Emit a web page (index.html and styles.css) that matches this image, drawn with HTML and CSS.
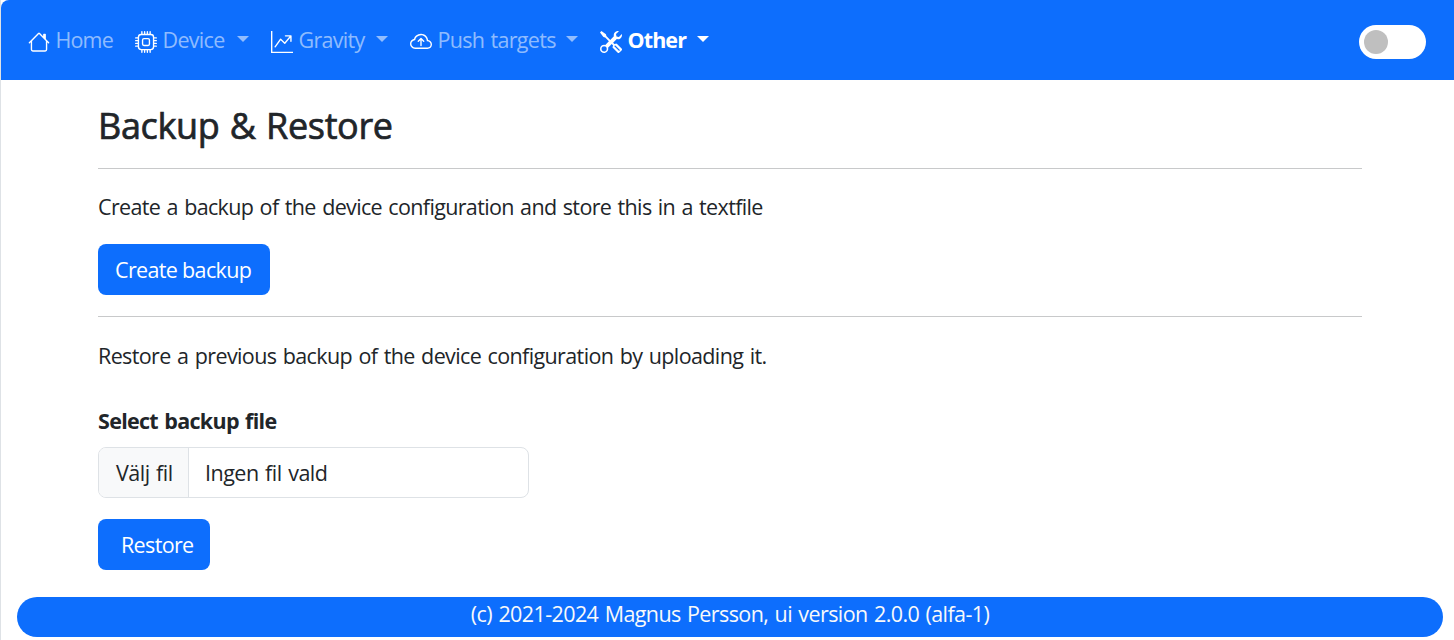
FILE: index.html
```html
<!DOCTYPE html>
<html lang="en">
<head>
<meta charset="utf-8">
<title>Backup &amp; Restore</title>
<link rel="stylesheet" href="styles.css">
</head>
<body>
<div class="app">
  <nav class="navbar">
    <a class="nav-item home"><svg class="icon" viewBox="0 0 16 16"><path d="M8.707 1.5a1 1 0 0 0-1.414 0L.646 8.146a.5.5 0 0 0 .708.708L2 8.207V13.5A1.5 1.5 0 0 0 3.5 15h9a1.5 1.5 0 0 0 1.5-1.5V8.207l.646.647a.5.5 0 0 0 .708-.708L13 5.793V2.5a.5.5 0 0 0-.5-.5h-1a.5.5 0 0 0-.5.5v1.293zM13 7.207V13.5a.5.5 0 0 1-.5.5h-9a.5.5 0 0 1-.5-.5V7.207l5-5z"/></svg><span class="nav-label">Home</span></a>
    <a class="nav-item device"><svg class="icon" viewBox="0 0 16 16"><path d="M5 0a.5.5 0 0 1 .5.5V2h1V.5a.5.5 0 0 1 1 0V2h1V.5a.5.5 0 0 1 1 0V2h1V.5a.5.5 0 0 1 1 0V2A2.5 2.5 0 0 1 14 4.5h1.5a.5.5 0 0 1 0 1H14v1h1.5a.5.5 0 0 1 0 1H14v1h1.5a.5.5 0 0 1 0 1H14v1h1.5a.5.5 0 0 1 0 1H14a2.5 2.5 0 0 1-2.5 2.5v1.5a.5.5 0 0 1-1 0V14h-1v1.5a.5.5 0 0 1-1 0V14h-1v1.5a.5.5 0 0 1-1 0V14h-1v1.5a.5.5 0 0 1-1 0V14A2.5 2.5 0 0 1 2 11.5H.5a.5.5 0 0 1 0-1H2v-1H.5a.5.5 0 0 1 0-1H2v-1H.5a.5.5 0 0 1 0-1H2v-1H.5a.5.5 0 0 1 0-1H2A2.5 2.5 0 0 1 4.5 2V.5A.5.5 0 0 1 5 0m-.5 3A1.5 1.5 0 0 0 3 4.5v7A1.5 1.5 0 0 0 4.5 13h7a1.5 1.5 0 0 0 1.5-1.5v-7A1.5 1.5 0 0 0 11.5 3zM5 6.5A1.5 1.5 0 0 1 6.5 5h3A1.5 1.5 0 0 1 11 6.5v3A1.5 1.5 0 0 1 9.5 11h-3A1.5 1.5 0 0 1 5 9.5zM6.5 6a.5.5 0 0 0-.5.5v3a.5.5 0 0 0 .5.5h3a.5.5 0 0 0 .5-.5v-3a.5.5 0 0 0-.5-.5z"/></svg><span class="nav-label">Device</span><span class="caret"></span></a>
    <a class="nav-item gravity"><svg class="icon" viewBox="0 0 16 16"><path fill-rule="evenodd" d="M0 0h1v15h15v1H0zm10 3.5a.5.5 0 0 1 .5-.5h4a.5.5 0 0 1 .5.5v4a.5.5 0 0 1-1 0V4.9l-3.613 4.417a.5.5 0 0 1-.74.037L7.06 6.767l-3.656 5.027a.5.5 0 0 1-.808-.588l4-5.5a.5.5 0 0 1 .758-.06l2.609 2.61L13.445 4H10.5a.5.5 0 0 1-.5-.5"/></svg><span class="nav-label">Gravity</span><span class="caret"></span></a>
    <a class="nav-item push"><svg class="icon" viewBox="0 0 16 16"><path fill-rule="evenodd" d="M7.646 5.146a.5.5 0 0 1 .708 0l2 2a.5.5 0 0 1-.708.708L8.5 6.707V10.5a.5.5 0 0 1-1 0V6.707L6.354 7.854a.5.5 0 1 1-.708-.708z"/><path d="M4.406 3.342A5.53 5.53 0 0 1 8 2c2.69 0 4.923 2 5.166 4.579C14.758 6.804 16 8.137 16 9.773 16 11.569 14.502 13 12.687 13H3.781C1.708 13 0 11.366 0 9.318c0-1.763 1.266-3.223 2.942-3.593.143-.863.698-1.723 1.464-2.383m.653.757c-.757.653-1.153 1.44-1.153 2.056v.448l-.445.049C2.064 6.805 1 7.952 1 9.318 1 10.785 2.23 12 3.781 12h8.906C13.98 12 15 10.988 15 9.773c0-1.216-1.02-2.228-2.313-2.228h-.5v-.5C12.188 4.825 10.328 3 8 3a4.53 4.53 0 0 0-2.941 1.1z"/></svg><span class="nav-label">Push targets</span><span class="caret"></span></a>
    <a class="nav-item other active"><svg class="icon" viewBox="0 0 16 16"><path d="M1 0 0 1l2.2 3.081a1 1 0 0 0 .815.419h.07a1 1 0 0 1 .708.293l2.675 2.675-2.617 2.654A3.003 3.003 0 0 0 0 13a3 3 0 1 0 5.878-.851l2.654-2.617.968.968-.305.914a1 1 0 0 0 .242 1.023l3.27 3.27a.997.997 0 0 0 1.414 0l1.586-1.586a.997.997 0 0 0 0-1.414l-3.27-3.27a1 1 0 0 0-1.023-.242L10.5 9.5l-.96-.96 2.68-2.643A3.005 3.005 0 0 0 16 3q0-.405-.102-.777l-2.14 2.141L12 4l-.364-1.757L13.777.102a3 3 0 0 0-3.675 3.68L7.462 6.46 4.793 3.793a1 1 0 0 1-.293-.707v-.071a1 1 0 0 0-.419-.814zm9.646 10.646a.5.5 0 0 1 .708 0l2.914 2.915a.5.5 0 0 1-.707.707l-2.915-2.914a.5.5 0 0 1 0-.708M3 11l.471.242.529.026.287.445.445.287.026.529L5 13l-.242.471-.026.529-.445.287-.287.445-.529.026L3 15l-.471-.242L2 14.732l-.287-.445L1.268 14l-.026-.529L1 13l.242-.471.026-.529.445-.287.287-.445.529-.026z"/></svg><span class="nav-label">Other</span><span class="caret"></span></a>
    <span class="switch"><span class="knob"></span></span>
  </nav>
  <main class="content">
    <h1 class="title"><span>Backup &amp; Restore</span></h1>
    <hr class="rule">
    <p class="text create-text"><span>Create a backup of the device configuration and store this in a textfile</span></p>
    <button class="btn create"><span>Create backup</span></button>
    <hr class="rule second">
    <p class="text restore-text"><span>Restore a previous backup of the device configuration by uploading it.</span></p>
    <label class="label"><span>Select backup file</span></label>
    <div class="file">
      <span class="file-button"><span>Välj fil</span></span>
      <span class="file-name"><span>Ingen fil vald</span></span>
    </div>
    <button class="btn restore"><span>Restore</span></button>
  </main>
  <footer class="footer"><span>(c) 2021-2024 Magnus Persson, ui version 2.0.0 (alfa-1)</span></footer>
</div>
</body>
</html>
```

FILE: styles.css
```css
* { box-sizing: border-box; }
body {
  margin: 0;
  height: 640px;
  overflow: hidden;
  background: #fff;
  color: #212529;
  font-family: "Open Sans", "Noto Sans", sans-serif;
  font-size: 21.5px;
  line-height: 33px;
  word-spacing: 1.4px;
}
.app { height: 640px; border-left: 1px solid #dee2e6; }
.navbar {
  display: flex;
  align-items: flex-start;
  height: 80px;
  padding: 23px 28px 0 27px;
  background: #0d6efd;
  border-top-left-radius: 8px;
}
.nav-item {
  display: flex;
  flex: none;
  white-space: nowrap;
  color: rgba(255, 255, 255, .55);
}
.home { width: 107px; }
.device { width: 136px; }
.gravity { width: 139px; }
.push { width: 190px; }
.other { width: 120px; }
.active { color: #fff; font-weight: 700; }
.icon { flex: none; width: 22px; height: 22px; margin-top: 8px; fill: #fff; }
.nav-label { flex: 1; width: 0; margin-left: 5.5px; letter-spacing: -.7px; }
.home .nav-label { letter-spacing: -.85px; }
.other .nav-label { letter-spacing: -.9px; }
.caret {
  width: 0;
  margin: 13px 22px 0 0;
  height: 6px;
  border: 6px solid transparent;
  border-top-color: currentColor;
  border-bottom: 0;
}
.other .caret { margin-right: 11px; }
.switch {
  width: 67px;
  height: 34px;
  margin: 2px 0 0 auto;
  padding: 5px;
  border-radius: 17px;
  background: #fff;
}
.knob { display: block; width: 24px; height: 24px; border-radius: 50%; background: #bfbfbf; }
.content {
  display: flex;
  flex-direction: column;
  align-items: flex-start;
  height: 517px;
  padding: 22px 92px 0 97px;
  white-space: nowrap;
}
.title {
  margin: 0;
  font-size: 36px;
  line-height: 48px;
  font-weight: 500;
  letter-spacing: -.35px;
  -webkit-text-stroke: .7px #212529;
}
.rule { width: 100%; height: 1px; margin: 18px 0 21px; border: 0; background: #c8c9ca; }
.second { margin: 21px 0 22px; }
.text { margin: 0; letter-spacing: -.65px; }
.restore-text { letter-spacing: -.62px; }
.create-text { margin-bottom: 21px; }
.btn {
  flex: none;
  height: 51px;
  padding: 0 17px;
  border: 0;
  border-radius: 8px;
  background: #0d6efd;
  color: #fff;
  font: inherit;
  letter-spacing: -.65px;
  text-align: left;
}
.create { width: 172px; }
.restore { width: 112px; padding-left: 23px; margin-top: 21px; }
.label { margin-top: 32px; font-weight: 700; letter-spacing: -.7px; }
.file {
  display: flex;
  width: 431px;
  height: 51px;
  margin-top: 10px;
  border: 1px solid #dee2e6;
  border-radius: 8px;
  line-height: 49px;
  letter-spacing: -.5px;
  overflow: hidden;
}
.file-button { width: 90px; padding-left: 17px; background: #f8f9fa; border-right: 1px solid #dee2e6; }
.file-name { padding-left: 16px; }
.footer {
  height: 40px;
  margin: 0 11px 0 16px;
  border-radius: 20px;
  background: #0d6efd;
  color: #f8f9fa;
  text-align: center;
  line-height: 34px;
  letter-spacing: -.6px;
}
```
